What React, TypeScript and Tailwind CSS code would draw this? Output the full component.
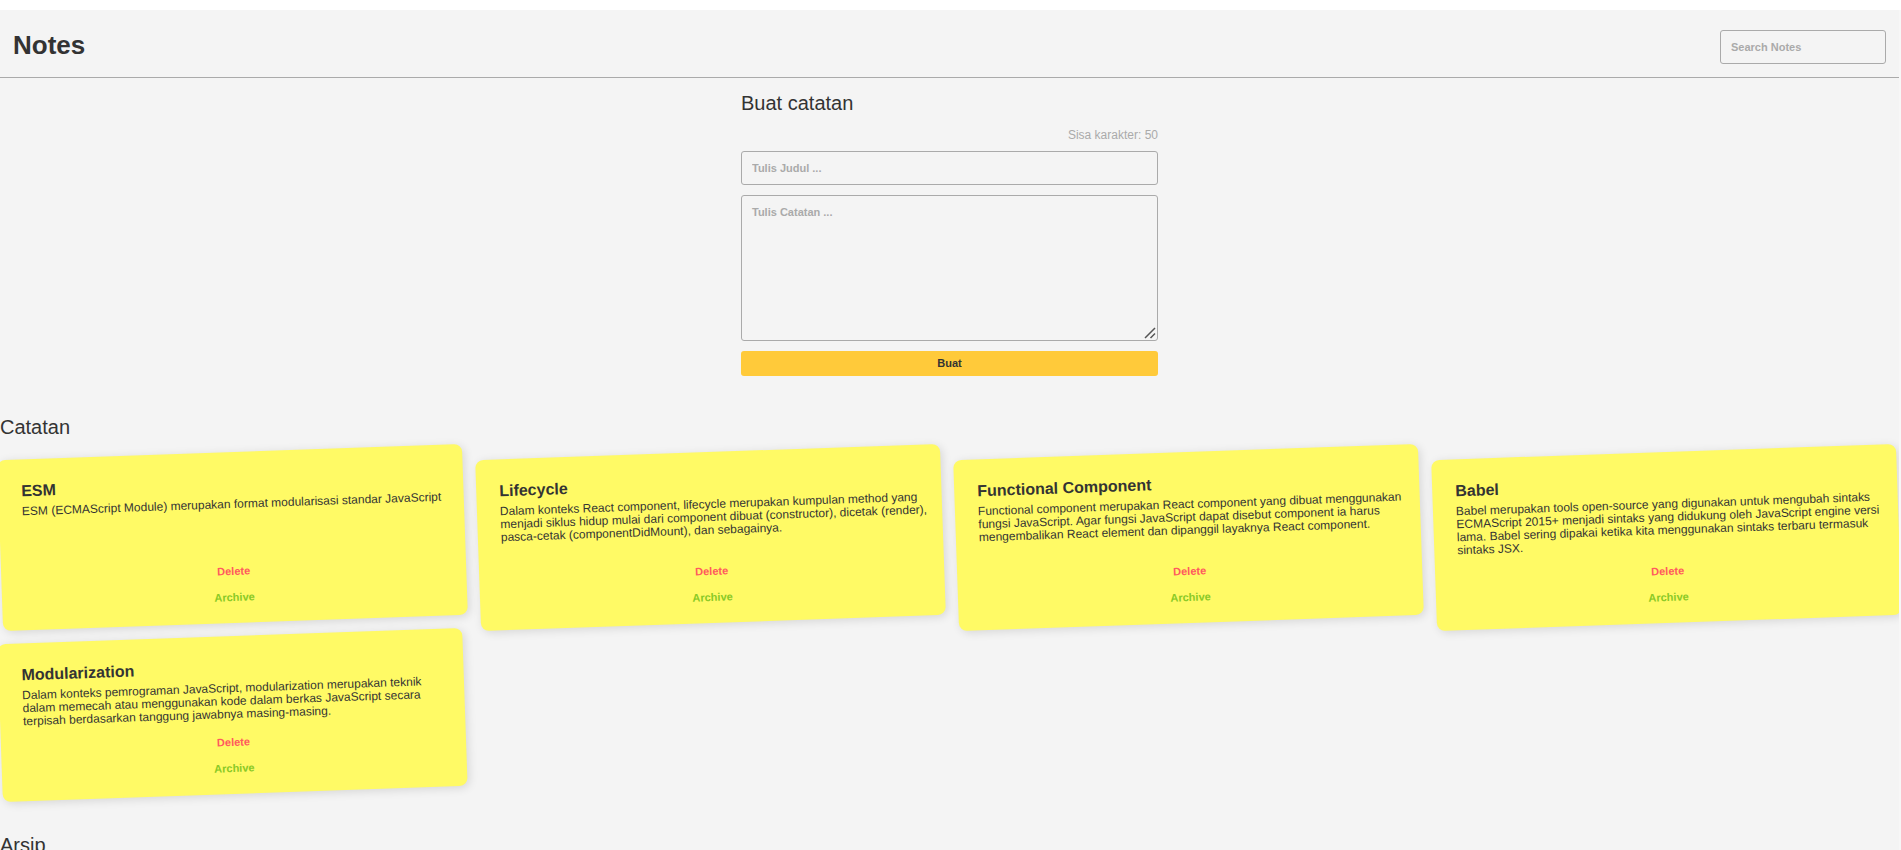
import React, { useState } from "react";

type Note = { id: number; title: string; body: string };

const TITLE_LIMIT = 50;

const notes: Note[] = [
  {
    id: 1,
    title: "ESM",
    body: "ESM (ECMAScript Module) merupakan format modularisasi standar JavaScript",
  },
  {
    id: 2,
    title: "Lifecycle",
    body: "Dalam konteks React component, lifecycle merupakan kumpulan method yang menjadi siklus hidup mulai dari component dibuat (constructor), dicetak (render), pasca-cetak (componentDidMount), dan sebagainya.",
  },
  {
    id: 3,
    title: "Functional Component",
    body: "Functional component merupakan React component yang dibuat menggunakan fungsi JavaScript. Agar fungsi JavaScript dapat disebut component ia harus mengembalikan React element dan dipanggil layaknya React component.",
  },
  {
    id: 4,
    title: "Babel",
    body: "Babel merupakan tools open-source yang digunakan untuk mengubah sintaks ECMAScript 2015+ menjadi sintaks yang didukung oleh JavaScript engine versi lama. Babel sering dipakai ketika kita menggunakan sintaks terbaru termasuk sintaks JSX.",
  },
  {
    id: 5,
    title: "Modularization",
    body: "Dalam konteks pemrograman JavaScript, modularization merupakan teknik dalam memecah atau menggunakan kode dalam berkas JavaScript secara terpisah berdasarkan tanggung jawabnya masing-masing.",
  },
];

const fieldClass =
  "block rounded-[3px] border border-[#aaaaaa] bg-transparent p-2.5 text-[11px] leading-3 font-bold text-[#333333] placeholder:text-[#aaaaaa] placeholder:opacity-100 focus:outline-none";

function Header() {
  return (
    <header className="flex items-start justify-between border-b border-[#aaaaaa] px-[13px] pt-5 pb-[13px]">
      <h1 className="text-[26px] leading-[30px] font-bold">Notes</h1>
      <input
        type="search"
        aria-label="Search Notes"
        placeholder="Search Notes"
        className={`${fieldClass} h-[34px] w-[166px]`}
      />
    </header>
  );
}

function NoteForm() {
  const [title, setTitle] = useState("");
  return (
    <form
      className="mx-auto mt-[13px] flex w-[417px] max-w-full flex-col"
      onSubmit={(event) => event.preventDefault()}
    >
      <h2 className="text-xl leading-6">Buat catatan</h2>
      <p className="mt-[13px] mb-2 text-right text-xs leading-[15px] text-[#aaaaaa]">
        Sisa karakter: {TITLE_LIMIT - title.length}
      </p>
      <input
        type="text"
        aria-label="Judul"
        placeholder="Tulis Judul ..."
        maxLength={TITLE_LIMIT}
        value={title}
        onChange={(event) => setTitle(event.target.value)}
        className={`${fieldClass} h-[34px]`}
      />
      <div className="relative mt-2.5">
        <textarea
          aria-label="Catatan"
          placeholder="Tulis Catatan ..."
          className={`${fieldClass} h-[146px] w-full resize-y [&::-webkit-resizer]:bg-transparent`}
        />
        <svg
          aria-hidden="true"
          viewBox="0 0 12 12"
          className="pointer-events-none absolute right-0.5 bottom-0.5 size-3"
          fill="none"
          stroke="#555555"
          strokeWidth="1.5"
        >
          <path d="M1 11 11 1M6.500 11 11 6.500" />
        </svg>
      </div>
      <button
        type="submit"
        className="mt-2.5 rounded-[3px] bg-[#ffca3a] pt-1.5 pb-[7px] text-[11px] leading-3 font-bold"
      >
        Buat
      </button>
    </form>
  );
}

function NoteCard({ note }: { note: Note }) {
  return (
    <article className="flex -rotate-2 flex-col rounded-lg bg-[#fffa65] px-[23px] pt-[23px] pb-[19px] shadow-[2px_2px_10px_rgba(0,0,0,0.12)]">
      <h3 className="text-base leading-[18px] font-bold">{note.title}</h3>
      <p className="mt-[5px] -mr-2.5 mb-[15px] flex-1 text-xs leading-[13px]">{note.body}</p>
      <div className="flex flex-col gap-[13px] text-[11px] leading-[13px] font-bold">
        <button type="button" className="text-[#ff595e]">
          Delete
        </button>
        <button type="button" className="text-[#8ac926]">
          Archive
        </button>
      </div>
    </article>
  );
}

export default function App() {
  return (
    <div className="h-screen overflow-hidden bg-white pt-2.5 font-['Liberation_Sans',Arial,sans-serif] text-[#333333]">
      <div className="min-h-full bg-[#f7f7f7] pr-0.5">
        <div className="min-h-screen overflow-hidden bg-[#f4f4f4]">
          <Header />
          <main>
            <NoteForm />
            <section className="mt-[39px]">
              <h2 className="text-xl leading-6">Catatan</h2>
              <div className="mt-[13px] grid grid-cols-4 gap-[13px]">
                {notes.map((note) => (
                  <NoteCard key={note.id} note={note} />
                ))}
              </div>
            </section>
            <section className="mt-[39px]">
              <h2 className="text-xl leading-6">Arsip</h2>
            </section>
          </main>
        </div>
      </div>
    </div>
  );
}
